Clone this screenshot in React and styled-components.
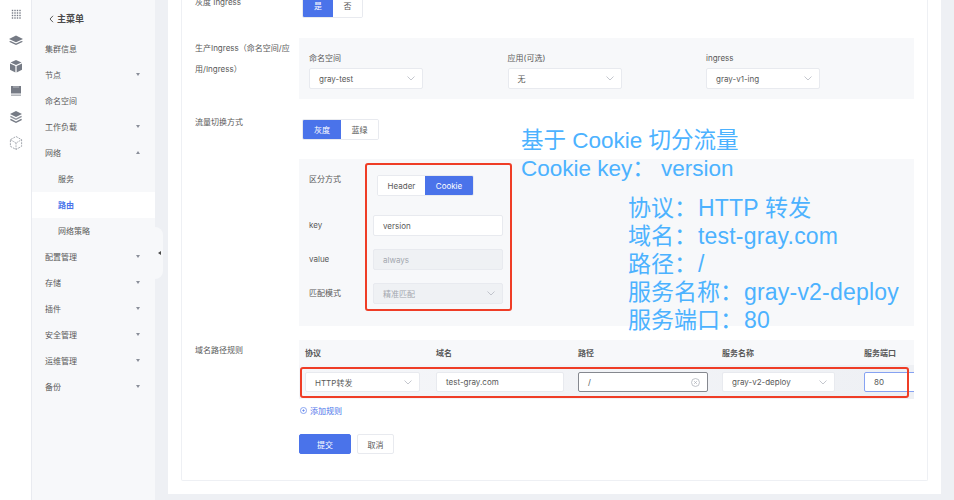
import React from 'react';
import styled, { createGlobalStyle } from 'styled-components';

const FONT = 'Inter, "Noto Sans CJK SC", sans-serif';
const NOTE_FONT = '"Liberation Sans", "Noto Sans CJK SC", sans-serif';
const BLUE = '#4a73ea';
const RULE_COLUMNS = '131px 142px 144px 142px 70px';

const GlobalStyle = createGlobalStyle`
  html, body {
    margin: 0;
    padding: 0;
    background: #fff;
  }
  * {
    box-sizing: border-box;
  }
`;

const Page = styled.div`
  position: relative;
  display: flex;
  width: 954px;
  height: 500px;
  overflow: hidden;
  font-family: ${FONT};
  font-size: 8px;
  color: #595959;
`;

const Rail = styled.nav`
  flex: none;
  display: flex;
  flex-direction: column;
  align-items: center;
  gap: 9.8px;
  width: 32px;
  padding-top: 6px;
  border-right: 1px solid #e9ebf0;
`;

const RailIcon = styled.svg`
  display: block;
  width: 16px;
  height: 16px;
  fill: #767b85;
`;

const RailOutline = styled(RailIcon)`
  fill: none;
  stroke: #8b9099;
  stroke-width: 0.8;
`;

const Sidebar = styled.aside`
  flex: none;
  width: 123px;
  background: #f7f8fa;
`;

const MenuTitle = styled.div`
  display: flex;
  align-items: center;
  gap: 3px;
  height: 35.5px;
  padding: 2px 0 0 17px;
  font-size: 9px;
  font-weight: 600;
  color: #4a4a4a;
`;

const MenuRow = styled.div`
  display: flex;
  align-items: center;
  justify-content: space-between;
  height: 26px;
  padding: 0 15px 0 ${props => (props.$child ? '26px' : '13px')};
  background: ${props => (props.$active ? '#fff' : 'transparent')};
  color: ${props => (props.$active ? BLUE : '#595959')};
  font-weight: ${props => (props.$active ? 600 : 400)};
`;

const Caret = styled.span`
  width: 0;
  height: 0;
  border-left: 2.5px solid transparent;
  border-right: 2.5px solid transparent;
  ${props => (props.$up
    ? 'border-bottom: 3px solid #8a8f99;'
    : 'border-top: 3px solid #8a8f99;')}
`;

const Workspace = styled.main`
  flex: 1;
  min-width: 0;
  position: relative;
  padding: 0 13px 6px;
  background: #eef0f4;
`;

const CollapseHandle = styled.button`
  position: absolute;
  left: 0;
  top: 227px;
  width: 8px;
  height: 52px;
  padding: 0;
  border: 0;
  border-radius: 0 8px 8px 0;
  background: #f7f8fa;

  &::after {
    content: '';
    position: absolute;
    left: 2.5px;
    top: 23.5px;
    border-top: 2.5px solid transparent;
    border-bottom: 2.5px solid transparent;
    border-right: 3px solid #4a4a4a;
  }
`;

const Panel = styled.section`
  height: 100%;
  padding: 0 13px 13px;
  background: #fff;
`;

const Card = styled.div`
  height: 100%;
  overflow: hidden;
  padding: 0 13px;
  border: solid #eef0f4;
  border-width: 0 1px 1px;
  border-radius: 0 0 2px 2px;
`;

const FormRow = styled.div`
  display: grid;
  grid-template-columns: 104px 615px;
  margin-bottom: ${props => props.$gap || 0}px;
`;

const FirstRow = styled(FormRow)`
  margin-top: -8px;
`;

const RowLabel = styled.div`
  width: 100px;
  line-height: 21px;
  margin-top: ${props => props.$shift || 0}px;
`;

const ToggleWrap = styled.div`
  padding-left: 3px;
`;

const Toggle = styled.div`
  display: inline-flex;
  height: ${props => props.$h || 21}px;
  border: 1px solid #e8eaef;
  border-radius: 2px;
  background: #fff;
  overflow: hidden;
`;

const ToggleItem = styled.span`
  display: flex;
  align-items: center;
  justify-content: center;
  width: ${props => props.$w}px;
  margin: -1px 0;
  background: ${props => (props.$on ? BLUE : '#fff')};
  color: ${props => (props.$on ? '#fff' : '#595959')};
`;

const SoftPanel = styled.div`
  background: #f7f8fa;
`;

const IngressPanel = styled(SoftPanel)`
  display: grid;
  grid-template-columns: repeat(3, 198.5px);
  height: 61px;
  padding: 14px 0 0 10px;
`;

const FieldLabel = styled.div`
  height: 16px;
  line-height: 12px;
`;

const Control = styled.div`
  display: flex;
  align-items: center;
  justify-content: space-between;
  width: ${props => (props.$w ? `${props.$w}px` : 'auto')};
  height: ${props => props.$h || 21}px;
  padding: 0 7px 0 9px;
  border: 1px solid ${props => props.$border || '#e8eaef'};
  border-radius: 2px;
  background: ${props => (props.$disabled ? '#eff1f4' : '#fff')};
  color: ${props => (props.$disabled ? '#a3a7af' : '#595959')};
  white-space: nowrap;
`;

const Chevron = styled.svg`
  flex: none;
  width: 8px;
  height: 5px;
  fill: none;
  stroke: #b5b9c1;
  stroke-width: 0.8;
`;

const TrafficPanel = styled(SoftPanel)`
  display: grid;
  grid-template-columns: 64px 130px;
  grid-template-rows: 40px 34px 34px 21px;
  align-items: start;
  height: 167px;
  padding: 16px 0 0 10px;
`;

const TrafficToggle = styled.div`
  padding-left: 4px;
`;

const TrafficLabel = styled.div`
  line-height: ${props => props.$lh || 21}px;
`;

const RuleTable = styled.div`
  overflow: hidden;
`;

const RuleHeader = styled.div`
  display: grid;
  grid-template-columns: ${RULE_COLUMNS};
  align-items: center;
  height: 25.5px;
  padding-left: 6px;
  background: #f7f8fa;
  font-weight: 600;
`;

const RuleCells = styled.div`
  display: grid;
  grid-template-columns: ${RULE_COLUMNS};
  align-items: center;
  height: 34px;
  padding-left: 6px;
  background: linear-gradient(to right, #f5f6f9, #eef0f4);
`;

const ClearIcon = styled.svg`
  flex: none;
  width: 9px;
  height: 9px;
  fill: none;
  stroke: #a9adb5;
  stroke-width: 0.8;
`;

const AddRule = styled.div`
  display: flex;
  align-items: center;
  gap: 3px;
  height: 11px;
  margin: 6px 0 0 1px;
  color: ${BLUE};
`;

const AddIcon = styled.svg`
  width: 7px;
  height: 7px;
  fill: none;
  stroke: ${BLUE};
  stroke-width: 0.7;
`;

const Actions = styled.div`
  display: flex;
  gap: 6px;
  margin-top: 18px;
`;

const ActionButton = styled.button`
  width: ${props => props.$w}px;
  height: 20px;
  padding: 0;
  border: 1px solid ${props => (props.$primary ? BLUE : '#e8eaef')};
  border-radius: 2px;
  background: ${props => (props.$primary ? BLUE : '#fff')};
  color: ${props => (props.$primary ? '#fff' : '#595959')};
  font: inherit;
`;

const RedBox = styled.div`
  position: absolute;
  left: ${props => props.$x}px;
  top: ${props => props.$y}px;
  width: ${props => props.$w}px;
  height: ${props => props.$h}px;
  border: 2px solid #ef3d26;
  border-radius: 3px;
  pointer-events: none;
`;

const Note = styled.div`
  position: absolute;
  left: ${props => props.$x}px;
  top: ${props => props.$y}px;
  font-family: ${NOTE_FONT};
  font-size: ${props => props.$size || 23}px;
  line-height: 28px;
  color: #4cb2ff;
  white-space: nowrap;
`;

const NoteValue = styled.span`
  margin-left: 1px;
  letter-spacing: 0.2px;
`;

const topMenu = [
  { label: '集群信息' },
  { label: '节点', caret: 'down' },
  { label: '命名空间' },
  { label: '工作负载', caret: 'down' },
  { label: '网络', caret: 'up' },
  { label: '服务', child: true },
  { label: '路由', child: true, active: true },
  { label: '网络策略', child: true },
  { label: '配置管理', caret: 'down' },
  { label: '存储', caret: 'down' },
  { label: '插件', caret: 'down' },
  { label: '安全管理', caret: 'down' },
  { label: '运维管理', caret: 'down' },
  { label: '备份', caret: 'down' },
];

const ingressFields = [
  { label: '命名空间', value: 'gray-test' },
  { label: '应用(可选)', value: '无' },
  { label: 'ingress', value: 'gray-v1-ing' },
];

const ruleHeads = ['协议', '域名', '路径', '服务名称', '服务端口'];

const noteLines = [
  { label: '协议：', value: 'HTTP 转发' },
  { label: '域名：', value: 'test-gray.com' },
  { label: '路径：', value: '/' },
  { label: '服务名称：', value: 'gray-v2-deploy' },
  { label: '服务端口：', value: '80' },
];

function ChevronDown() {
  return (
    <Chevron viewBox="0 0 8 5">
      <path d="M0.5 0.5 L4 4 L7.5 0.5" />
    </Chevron>
  );
}

function RailIcons() {
  return (
    <Rail>
      <RailIcon viewBox="0 0 16 16">
        {[4.5, 7, 9.5, 12].flatMap(y => [4.5, 7, 9.5, 12].map(x => (
          <rect key={`${x}-${y}`} x={x - 0.7} y={y - 0.7} width="1.4" height="1.4" />
        )))}
      </RailIcon>
      <RailIcon viewBox="0 0 16 16">
        <path d="M8 3.5 L15 7 L8 10.3 L1 7 Z" />
        <path d="M2.6 9 L8 11.5 L13.4 9 L15 9.8 L8 13 L1 9.8 Z" />
      </RailIcon>
      <RailIcon viewBox="0 0 16 16">
        <path d="M8 2 L13.5 4.6 L8 7 L2.5 4.6 Z" />
        <path d="M2 5.6 L7.4 8 V14.4 L2 11.8 Z" />
        <path d="M14 5.6 L8.6 8 V14.4 L14 11.8 Z" />
      </RailIcon>
      <RailIcon viewBox="0 0 16 16">
        <path d="M3 3 H5 V5 H11 V3 H13 V10.6 H3 Z" />
        <path d="M5 3 H11 V5 H5 Z" opacity="0.75" />
        <path d="M3 11.4 H13 V13 H3 Z" opacity="0.55" />
      </RailIcon>
      <RailIcon viewBox="0 0 16 16">
        <path d="M8 2 L14 5 L8 8 L2 5 Z" />
        <path d="M2.8 6.8 L8 9.4 L13.2 6.8 L14 8 L8 11 L2 8 Z" opacity="0.8" />
        <path d="M2.8 9.8 L8 12.4 L13.2 9.8 L14 11 L8 14 L2 11 Z" />
      </RailIcon>
      <RailOutline viewBox="0 0 16 16">
        <path d="M8 1.5 L13.6 4.7 V11.3 L8 14.5 L2.4 11.3 V4.7 Z" strokeDasharray="2 1" />
        <path d="M2.4 4.7 L8 8 L13.6 4.7 M8 8 V14.5" strokeDasharray="1.4 1" />
      </RailOutline>
    </Rail>
  );
}

function Menu() {
  return (
    <Sidebar>
      <MenuTitle>
        <svg width="5" height="8" viewBox="0 0 5 8" fill="none" stroke="#4a4a4a" strokeWidth="0.9">
          <path d="M4 0.8 L1 4 L4 7.2" />
        </svg>
        主菜单
      </MenuTitle>
      {topMenu.map(item => (
        <MenuRow key={item.label} $child={item.child} $active={item.active}>
          {item.label}
          {item.caret && <Caret $up={item.caret === 'up'} />}
        </MenuRow>
      ))}
    </Sidebar>
  );
}

export default function App() {
  return (
    <Page>
      <GlobalStyle />
      <RailIcons />
      <Menu />
      <Workspace>
        <CollapseHandle aria-label="collapse" />
        <Panel>
          <Card>
            <FirstRow $gap={20}>
              <RowLabel>灰度 Ingress</RowLabel>
              <ToggleWrap>
                <Toggle $h={26}>
                  <ToggleItem $on $w={30}>是</ToggleItem>
                  <ToggleItem $w={29}>否</ToggleItem>
                </Toggle>
              </ToggleWrap>
            </FirstRow>

            <FormRow $gap={19.5}>
              <RowLabel>生产Ingress（命名空间/应用/Ingress）</RowLabel>
              <IngressPanel>
                {ingressFields.map(field => (
                  <div key={field.label}>
                    <FieldLabel>{field.label}</FieldLabel>
                    <Control $w={114}>
                      {field.value}
                      <ChevronDown />
                    </Control>
                  </div>
                ))}
              </IngressPanel>
            </FormRow>

            <FormRow $gap={19.5}>
              <RowLabel $shift={-7}>流量切换方式</RowLabel>
              <ToggleWrap>
                <Toggle>
                  <ToggleItem $on $w={38}>灰度</ToggleItem>
                  <ToggleItem $w={37}>蓝绿</ToggleItem>
                </Toggle>
              </ToggleWrap>
            </FormRow>

            <FormRow $gap={13.5}>
              <div />
              <TrafficPanel>
                <TrafficLabel $lh={8}>区分方式</TrafficLabel>
                <TrafficToggle>
                  <Toggle>
                    <ToggleItem $w={47}>Header</ToggleItem>
                    <ToggleItem $on $w={48}>Cookie</ToggleItem>
                  </Toggle>
                </TrafficToggle>
                <TrafficLabel>key</TrafficLabel>
                <Control>version</Control>
                <TrafficLabel>value</TrafficLabel>
                <Control $disabled>always</Control>
                <TrafficLabel>匹配模式</TrafficLabel>
                <Control $disabled>
                  精准匹配
                  <ChevronDown />
                </Control>
              </TrafficPanel>
            </FormRow>

            <FormRow>
              <RowLabel>域名路径规则</RowLabel>
              <div>
                <RuleTable>
                  <RuleHeader>
                    {ruleHeads.map(head => <div key={head}>{head}</div>)}
                  </RuleHeader>
                  <RuleCells>
                    <Control $w={115} $h={20}>
                      HTTP转发
                      <ChevronDown />
                    </Control>
                    <Control $w={128} $h={20}>test-gray.com</Control>
                    <Control $w={130} $h={20} $border="#85888f">
                      /
                      <ClearIcon viewBox="0 0 10 10">
                        <circle cx="5" cy="5" r="4.4" />
                        <path d="M3.5 3.5 L6.5 6.5 M6.5 3.5 L3.5 6.5" />
                      </ClearIcon>
                    </Control>
                    <Control $w={113} $h={20}>
                      gray-v2-deploy
                      <ChevronDown />
                    </Control>
                    <Control $w={70} $h={20} $border="#86a2f2">80</Control>
                  </RuleCells>
                </RuleTable>
                <AddRule>
                  <AddIcon viewBox="0 0 8 8">
                    <circle cx="4" cy="4" r="3.5" />
                    <path d="M2.5 4 H5.5 M4 2.5 V5.5" />
                  </AddIcon>
                  添加规则
                </AddRule>
                <Actions>
                  <ActionButton $primary $w={52}>提交</ActionButton>
                  <ActionButton $w={37}>取消</ActionButton>
                </Actions>
              </div>
            </FormRow>
          </Card>
        </Panel>
      </Workspace>

      <RedBox $x={365} $y={163} $w={147} $h={148} />
      <RedBox $x={300} $y={367} $w={609} $h={31} />
      <Note $x={521} $y={127} $size={22.5}>基于 Cookie 切分流量</Note>
      <Note $x={521} $y={155} $size={22.5}>Cookie key： version</Note>
      <Note $x={628} $y={194}>
        {noteLines.map(line => (
          <div key={line.label}>
            {line.label}
            <NoteValue>{line.value}</NoteValue>
          </div>
        ))}
      </Note>
    </Page>
  );
}
